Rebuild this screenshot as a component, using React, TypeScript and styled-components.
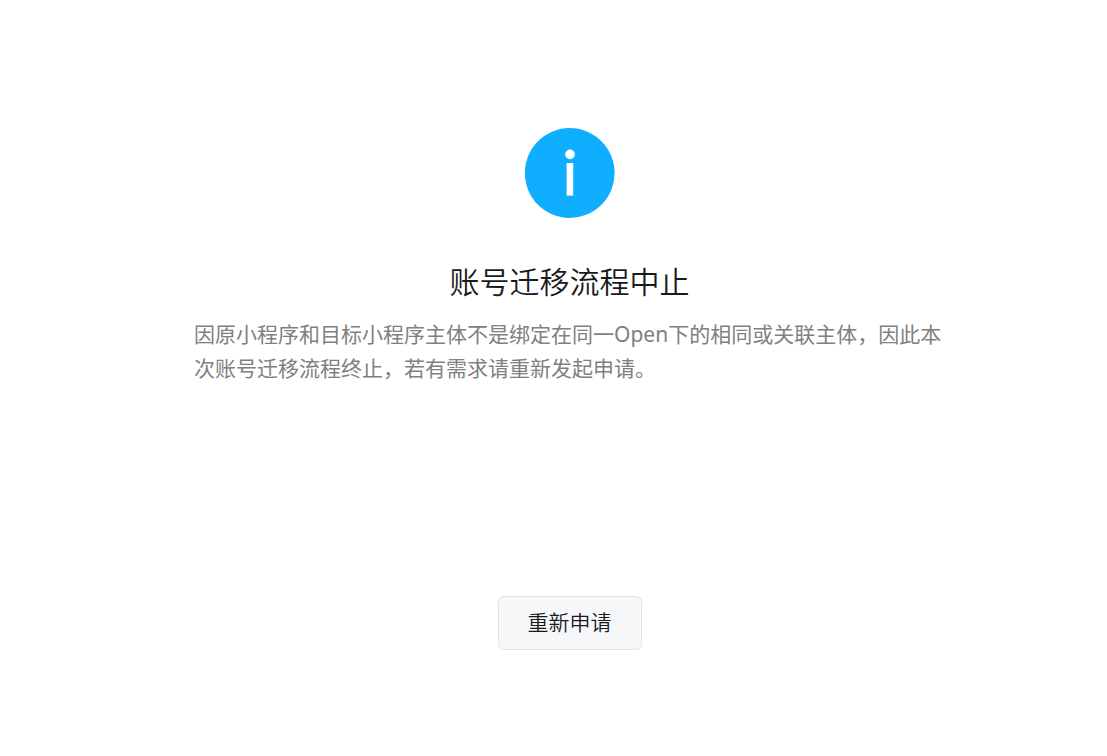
import React from "react";
import styled, { createGlobalStyle } from "styled-components";

const GlobalStyle = createGlobalStyle`
  * {
    box-sizing: border-box;
  }
  body {
    margin: 0;
    background: #fff;
    color: #181a1d;
    font-family: "Noto Sans", "Noto Sans CJK SC", sans-serif;
  }
`;

const Page = styled.main`
  display: flex;
  justify-content: center;
  padding: 128px 0 96px 32px;
`;

const Result = styled.section`
  display: flex;
  flex-direction: column;
  align-items: center;
  width: 100%;
  max-width: 751px;
`;

const StatusIcon = styled.svg`
  display: block;
  width: 90px;
  height: 90px;
`;

const Title = styled.h1`
  margin: 40px 0 11px;
  font-size: 30px;
  line-height: 48px;
  font-weight: 350;
`;

const Description = styled.p`
  width: 100%;
  margin: 0;
  color: #808080;
  font-size: 21px;
  line-height: 34px;
  font-weight: 400;
`;

const Button = styled.button`
  min-width: 144px;
  height: 54px;
  margin-top: 211px;
  padding: 0 28px 2px;
  border: 1px solid #e3e4e6;
  border-radius: 6px;
  background: #f6f7f9;
  color: inherit;
  font-family: inherit;
  font-size: 21px;
  line-height: 32px;
  font-weight: 350;
  cursor: pointer;
`;

export default function App() {
  return (
    <>
      <GlobalStyle />
      <Page lang="zh-CN">
        <Result>
          <StatusIcon viewBox="0 0 90 90" aria-hidden="true">
            <circle cx="44.7" cy="45" r="44.9" fill="#10aeff" />
            <circle cx="45" cy="26.4" r="4.8" fill="#fff" />
            <rect x="41.6" y="35" width="6.6" height="32.6" fill="#fff" />
          </StatusIcon>
          <Title>账号迁移流程中止</Title>
          <Description>
            因原小程序和目标小程序主体不是绑定在同一Open下的相同或关联主体，因此本次账号迁移流程终止，若有需求请重新发起申请。
          </Description>
          <Button type="button">重新申请</Button>
        </Result>
      </Page>
    </>
  );
}
